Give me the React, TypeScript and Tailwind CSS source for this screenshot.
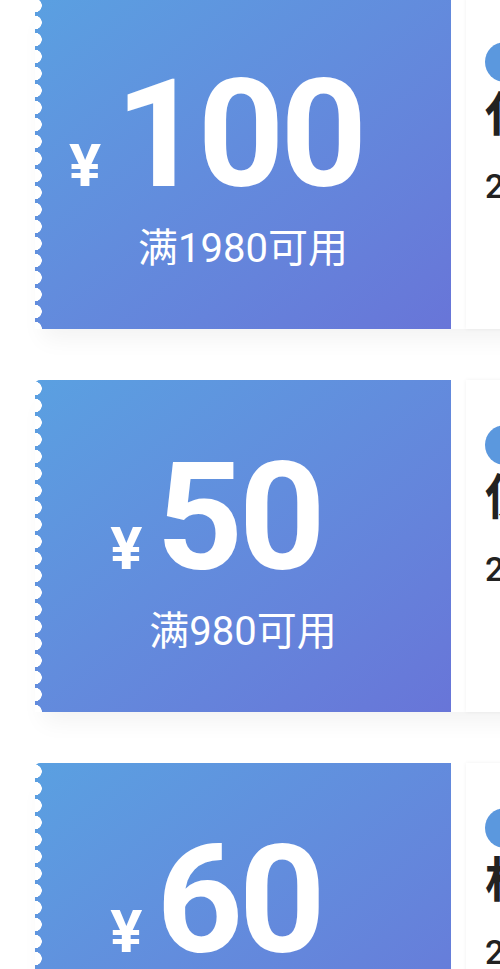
const coupons = [
  { amount: "100", limit: "满1980可用", title: "代金券", date: "2023-12-31" },
  { amount: "50", limit: "满980可用", title: "使用券", date: "2023-12-31" },
  { amount: "60", limit: "满680可用", title: "机票券", date: "2023-12-31" },
];

function Coupon({ amount, limit, title, date }: (typeof coupons)[number]) {
  return (
    <div className="flex w-[720px] shrink-0 bg-white shadow-[0_18px_22px_-8px_rgba(0,0,0,0.05)]">
      <div className="relative flex h-[332px] w-[416px] shrink-0 flex-col items-center rounded-l-[5px] bg-linear-to-br from-[#5aa0e1] to-[#6875d8] text-white">
        <div className="absolute left-0 top-0 h-full w-[8px] bg-[radial-gradient(circle_at_0_50%,#fff_6.5px,transparent_7px)] bg-[length:8px_17px] bg-repeat-y" />
        <div className="mr-[54px] mt-[62px] flex items-baseline font-['Roboto',sans-serif] font-bold leading-none">
          <span className="mr-[14px] text-[60px]">¥</span>
          <span className="text-[151px] tracking-[-4px]">{amount}</span>
        </div>
        <div className="mt-[19px] font-['Roboto','Noto_Sans_CJK_SC',sans-serif] text-[40px] leading-none">
          {limit}
        </div>
      </div>
      <div className="ml-[15px] flex flex-1 flex-col pl-[19px] pt-[45px] shadow-[0_0_4px_rgba(0,0,0,0.06)]">
        <div className="h-[40px] w-[40px] rounded-full bg-[#5b98de]" />
        <div className="mt-[4px] font-['Noto_Sans_CJK_SC',sans-serif] text-[48px] font-bold leading-none text-[#222]">
          {title}
        </div>
        <div className="mt-[35px] font-['Roboto',sans-serif] text-[34px] font-medium leading-none text-[#222]">
          {date}
        </div>
      </div>
    </div>
  );
}

export default function App() {
  return (
    <div className="h-[969px] w-[500px] overflow-hidden bg-white">
      <div className="-mt-[3px] flex flex-col gap-[51px] pl-[35px]">
        {coupons.map((c) => (
          <Coupon key={c.amount} {...c} />
        ))}
      </div>
    </div>
  );
}
